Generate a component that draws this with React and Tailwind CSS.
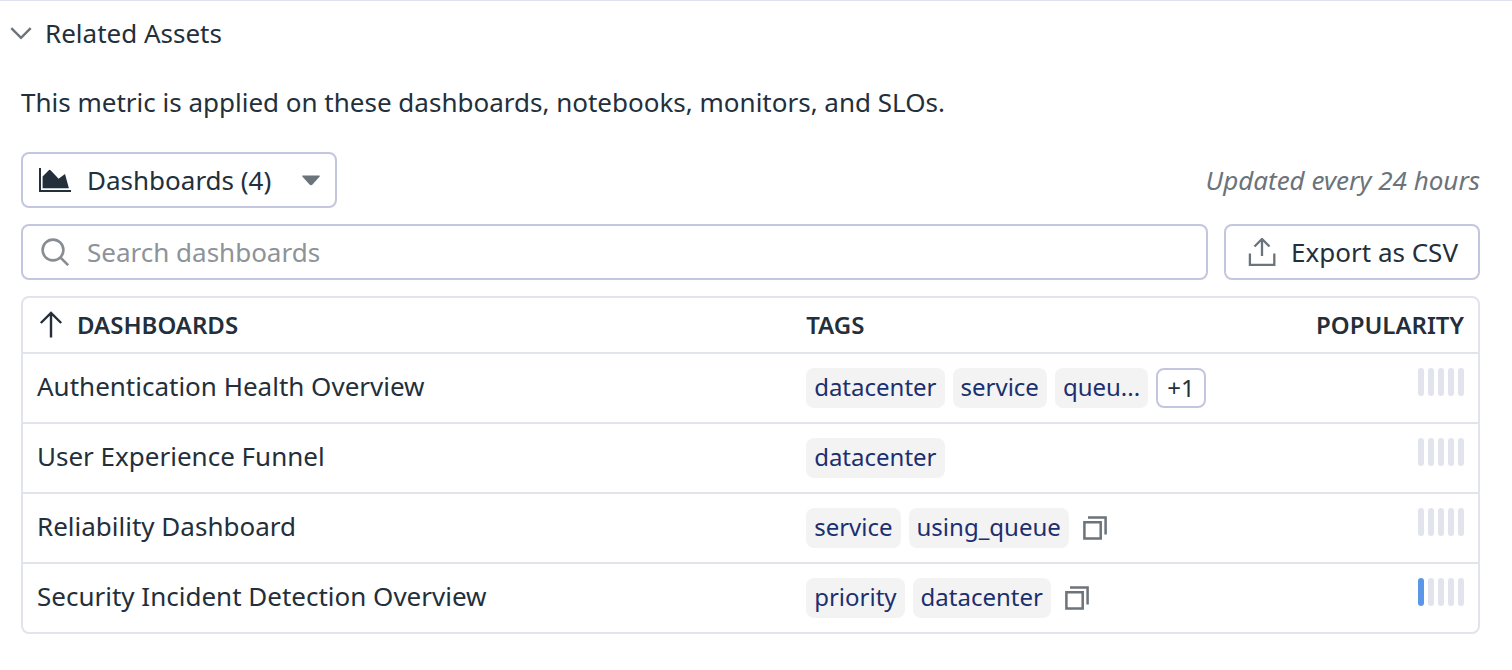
import { useState } from "react";

const dashboards = [
  { name: "Authentication Health Overview", tags: ["datacenter", "service", "queu..."], more: 1, popularity: 0 },
  { name: "User Experience Funnel", tags: ["datacenter"], popularity: 0 },
  { name: "Reliability Dashboard", tags: ["service", "using_queue"], copy: true, popularity: 0 },
  { name: "Security Incident Detection Overview", tags: ["priority", "datacenter"], copy: true, popularity: 1 },
];

const ChevronIcon = () => (
  <svg className="w-6 h-6" viewBox="0 0 24 24" fill="none" stroke="#6b737b" strokeWidth="2.4">
    <path d="M2.3 7.2 L12 16.8 L21.7 7.2" />
  </svg>
);

const AreaChartIcon = () => (
  <svg className="w-8 h-6" viewBox="0 0 32 24" fill="#232f3a">
    <path d="M0 0h2v22h30v2H0z" />
    <path d="M3.6 20.2V8.6L9.800 2.200Q10.700 1.400 11.600 2.200L19.600 10.800L26 6L29.900 20.200z" />
  </svg>
);

const SearchIcon = () => (
  <svg className="w-7 h-7" viewBox="0 0 28 28" fill="none" stroke="#878d93" strokeWidth="2.6">
    <circle cx="12" cy="12" r="10.4" />
    <path d="M19.300 19.300 L27.200 27.200" />
  </svg>
);

const ExportIcon = () => (
  <svg className="w-7 h-7" viewBox="0 0 28 28" fill="none" stroke="#6b737b" strokeWidth="2.3">
    <path d="M1.900 15.500v11.300h24.400V15.500" />
    <path d="M14 18V1.500M6.500 8.500 L14 1 L21.500 8.500" />
  </svg>
);

const SortIcon = () => (
  <svg className="w-6 h-7" viewBox="0 0 24 28" fill="none" stroke="#232f3a" strokeWidth="2.4">
    <path d="M12 26.500V2M1.800 12 L12 2 L22.200 12" />
  </svg>
);

const CopyIcon = () => (
  <svg className="w-6 h-6" viewBox="0 0 24 24" fill="none" stroke="#6b737b" strokeWidth="2.500">
    <path d="M1.400 6.300h16.300v16.300H1.400z" />
    <path d="M5 1.400h17.600V18.500" />
  </svg>
);

const Popularity = ({ level }) => (
  <div className="flex justify-end gap-1">
    {[0, 1, 2, 3, 4].map((i) => (
      <span
        key={i}
        className={i < level ? "w-1.5 h-7 rounded-full bg-[#5b96e8]" : "w-1.5 h-7 rounded-full bg-[#e1e4ec]"}
      />
    ))}
  </div>
);

const App = () => {
  const [open, setOpen] = useState(true);
  const [search, setSearch] = useState("");

  const rows = dashboards.filter(({ name }) => name.toLowerCase().includes(search.toLowerCase()));

  return (
    <section className="border-t border-[#dfe2ec] bg-white pl-[21px] pr-8 pb-9 font-['Noto_Sans',sans-serif] text-[26px] leading-9 text-[#232f3a]">
      <button
        type="button"
        aria-expanded={open}
        onClick={() => setOpen(!open)}
        className="mt-3.5 -ml-3 flex items-center gap-3"
      >
        <ChevronIcon />
        Related Assets
      </button>

      {open && (
        <>
          <p className="mt-[33px]">This metric is applied on these dashboards, notebooks, monitors, and SLOs.</p>

          <div className="mt-8 flex items-center justify-between">
            <div className="relative">
              <select
                aria-label="Asset type"
                className="h-14 w-[316px] appearance-none rounded-lg border-2 border-[#c3c6de] bg-white pl-16 pr-12"
              >
                <option>Dashboards (4)</option>
              </select>
              <span className="pointer-events-none absolute inset-y-0 left-[18px] flex items-center">
                <AreaChartIcon />
              </span>
              <svg
                className="pointer-events-none absolute inset-y-0 right-4 my-auto w-5 h-3"
                viewBox="0 0 20 12"
                fill="#6b737b"
              >
                <path d="M2 1.500h16q1.500 0 .5 1.200L11.500 10.500q-1.500 1.500-3 0L1.500 2.700Q.5 1.500 2 1.500z" />
              </svg>
            </div>
            <em className="text-[#6b737b]">Updated every 24 hours</em>
          </div>

          <div className="mt-4 flex gap-4">
            <div className="relative flex-1">
              <input
                type="text"
                aria-label="Search dashboards"
                placeholder="Search dashboards"
                value={search}
                onChange={(e) => setSearch(e.target.value)}
                className="h-14 w-full rounded-lg border-2 border-[#c3c6de] pl-16 pr-4 placeholder:text-[#8d9398]"
              />
              <span className="pointer-events-none absolute inset-y-0 left-5 flex items-center">
                <SearchIcon />
              </span>
            </div>
            <button
              type="button"
              className="flex h-14 items-center gap-[15px] rounded-lg border-2 border-[#c3c6de] pl-[22px] pr-5"
            >
              <ExportIcon />
              Export as CSV
            </button>
          </div>

          <div className="mt-4 rounded-lg border-2 border-[#e1e4ec]">
            <table className="w-full table-fixed text-left">
              <thead>
                <tr className="border-b-2 border-[#e1e4ec] text-2xl leading-[54px]">
                  <th className="w-[53%] pl-4 font-semibold">
                    <button type="button" className="flex items-center gap-3.5">
                      <SortIcon />
                      DASHBOARDS
                    </button>
                  </th>
                  <th className="pl-3 font-semibold">TAGS</th>
                  <th className="w-[15%] pr-3.5 text-right font-semibold">POPULARITY</th>
                </tr>
              </thead>
              <tbody>
                {rows.map(({ name, tags, more, copy, popularity }) => (
                  <tr key={name} className="border-b-2 border-[#e1e4ec] align-top last:border-b-0">
                    <td className="py-3.5 pl-3.5">{name}</td>
                    <td className="py-3.5 pl-3">
                      <div className="flex items-center gap-2 text-2xl leading-[38px]">
                        {tags.map((tag) => (
                          <span key={tag} className="h-10 rounded-lg bg-[#f3f3f4] px-2 text-[#1c2f6e]">
                            {tag}
                          </span>
                        ))}
                        {more && (
                          <button type="button" className="h-10 rounded-lg border-2 border-[#c3c6de] px-[9px] leading-9">
                            +{more}
                          </button>
                        )}
                        {copy && (
                          <button type="button" aria-label="Copy tags" className="ml-1.5">
                            <CopyIcon />
                          </button>
                        )}
                      </div>
                    </td>
                    <td className="py-3.5 pr-3.5">
                      <Popularity level={popularity} />
                    </td>
                  </tr>
                ))}
              </tbody>
            </table>
          </div>
        </>
      )}
    </section>
  );
};

export default App;
